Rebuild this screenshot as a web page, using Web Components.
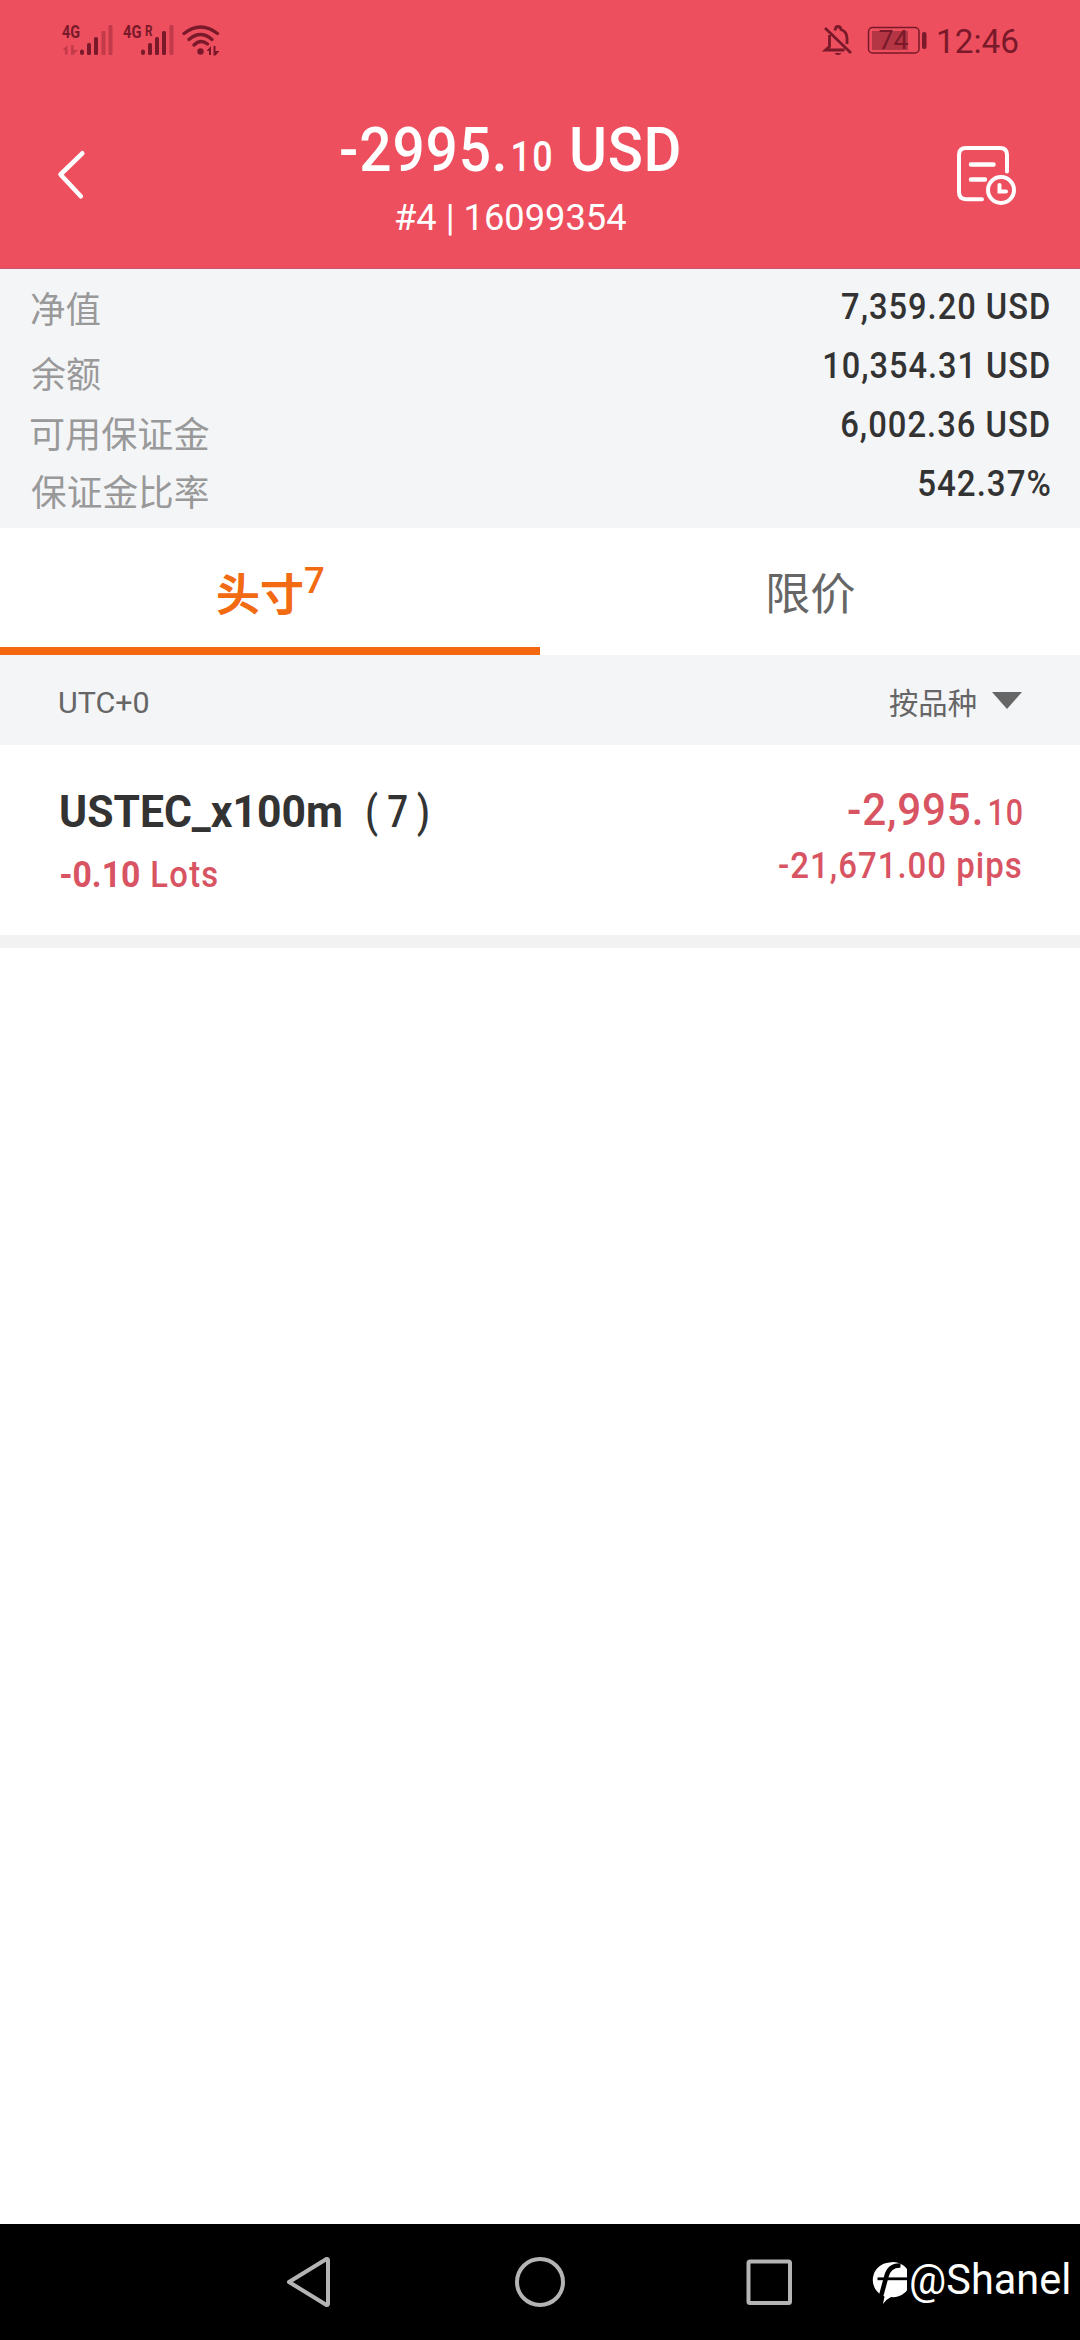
<!DOCTYPE html>
<html lang="zh-CN">
<head>
<meta charset="utf-8">
<title>Account</title>
<style>
html,body{margin:0;padding:0;background:#fff}
body{width:1080px;height:2340px;overflow:hidden}
</style>
</head>
<body>
<trade-screen></trade-screen>
<script>
const ctx = document.createElement('canvas').getContext('2d');

/* Text whose box is exactly its ink width and its cap height (or ink height for Chinese). */
class FitText extends HTMLElement {
  connectedCallback() {
    const w = +this.getAttribute('w'), h = +this.getAttribute('h');
    const cjk = this.hasAttribute('cjk');
    const size = cjk ? +this.getAttribute('cjk') : h / 0.711;
    const weight = this.getAttribute('weight') || 400;
    const ls = +(this.getAttribute('ls') || 0) * size;
    const fam = cjk ? '"Noto Sans CJK SC", sans-serif' : 'Roboto, sans-serif';
    ctx.font = `${weight} ${size}px ${fam}`;
    ctx.letterSpacing = ls + 'px';
    const m = ctx.measureText(this.textContent);
    const right = m.actualBoundingBoxRight, left = -m.actualBoundingBoxLeft;
    const sx = w / (right - left);
    const base = h / 2 + (m.fontBoundingBoxAscent - m.fontBoundingBoxDescent) / 2;
    const ty = (cjk ? m.actualBoundingBoxAscent : h) - base;
    this.attachShadow({mode: 'open'}).innerHTML = `<style>
      :host{display:block;flex:none;width:${w}px;height:${h}px}
      span{display:block;width:max-content;white-space:pre;font:${weight} ${size}px/${h}px ${fam};
        letter-spacing:${ls}px;transform-origin:0 0;transform:translate(${-left * sx}px,${ty}px) scaleX(${sx})}
    </style><span><slot></slot></span>`;
  }
}

const define = (name, html) => customElements.define(name, class extends HTMLElement {
  constructor() { super(); this.attachShadow({mode: 'open'}).innerHTML = html; }
});

define('status-bar', `<style>
  :host{display:flex;justify-content:space-between;height:80px;box-sizing:border-box;padding:20px 62px 0 60px;color:#79192a}
  .r{display:flex}
  svg{display:block}
  text{font-family:Roboto,sans-serif}
  .time{padding:9px 0 0 11px}
</style>
<svg width="165" height="40" viewBox="60 20 165 40" fill="#79192a">
  <g font-size="18.5" font-weight="700">
    <text x="62" y="38" textLength="18" lengthAdjust="spacingAndGlyphs">4G</text>
    <text x="123" y="38" textLength="18.5" lengthAdjust="spacingAndGlyphs">4G</text>
    <text x="145" y="36" font-size="15" textLength="7.5" lengthAdjust="spacingAndGlyphs">R</text>
  </g>
  <g fill="#c33b4a"><path d="M62.500 50l5-5v9.500h-2.500v-4.500zM71 45h2.500v5h4.500l-5 5h-2z"/>
    <rect x="101.500" y="31" width="4" height="24" rx="1"/><rect x="108.500" y="25" width="4" height="30" rx="1"/><rect x="169.500" y="25" width="4" height="30" rx="1"/></g>
  <rect x="80" y="49.500" width="4" height="5.500" rx="2"/><rect x="87" y="43" width="4" height="12" rx="1.500"/><rect x="94" y="37" width="4" height="18" rx="1.500"/>
  <rect x="141" y="49.500" width="4" height="5.500" rx="2"/><rect x="148" y="43" width="4" height="12" rx="1.500"/><rect x="155" y="37" width="4" height="18" rx="1.500"/><rect x="162" y="31" width="4" height="24" rx="1.500"/>
  <g fill="none" stroke="#79192a" stroke-width="3.200" stroke-linecap="round"><path d="M184 33.500Q200.500 20.500 217.500 33.500M189 39.500Q200.500 29.500 212 39.500M194 45Q200.500 38.500 207.500 44"/></g>
  <circle cx="200.500" cy="51.500" r="3.200"/><path d="M206.500 51l4.500-5v9h-2v-4zM213.500 46h2v5h4l-4 4.500h-2z"/>
</svg>
<div class="r">
<svg width="106" height="40" viewBox="820 20 106 40" fill="none" stroke="#79192a">
  <path d="M824 28L850 53M828.500 35V46.500L824.500 50H843.500M834 30.500Q834.500 26.500 837 26.500Q839.500 26.500 840 29.500Q845.500 31.500 846 37.500V44" stroke-width="2.800"/>
  <path d="M833.500 53h7q-1 2-3.500 2t-3.500-2z" fill="#79192a" stroke="none"/>
  <rect x="867.500" y="27.500" width="50.500" height="25.500" rx="4" stroke-width="1.500"/>
  <rect x="871" y="31" width="36" height="19" fill="#b43645" stroke="none"/>
  <text x="877.500" y="49" font-size="25" textLength="30" lengthAdjust="spacingAndGlyphs" fill="#79192a" stroke="none">74</text>
  <rect x="921" y="32" width="4.500" height="17" rx="2" fill="#79192a" stroke="none"/>
</svg>
<div class="time"><fit-text w="80" h="24">12:46</fit-text></div>
</div>`);

define('account-header', `<style>
  :host{display:block;height:269px;box-sizing:border-box;background:#ed4f5e;border-bottom:1px solid #c9596a;color:#fff}
  .bar{display:flex;padding:0 63px 0 57px}
  svg{display:block}
  .back{padding-top:70px}.log{padding-top:64px;margin-left:auto}
  .mid{padding-top:48px;margin-left:254px}
  .amount{display:flex;align-items:flex-end}
  .sub{padding:33px 0 0 55px}
</style>
<status-bar></status-bar>
<div class="bar">
  <div class="back"><svg width="30" height="50" viewBox="57 150 30 50" fill="none" stroke="#fff" stroke-width="4.600" stroke-linecap="round" stroke-linejoin="round"><path d="M82.300 153.300L60.500 174.500L80.800 196.200"/></svg></div>
  <div class="mid">
    <div class="amount"><fit-text w="163" h="43" weight="500" ls=".015">-2995.</fit-text><fit-text style="margin-left:9px" w="38" h="30" ls=".04" weight="500">10</fit-text><fit-text style="margin-left:21px" w="107" h="43" weight="500" ls=".01">USD</fit-text></div>
    <div class="sub"><fit-text w="230" h="26">#4 | 16099354</fit-text></div>
  </div>
  <div class="log"><svg width="62" height="62" viewBox="955 144 62 62" fill="none" stroke="#fff" stroke-width="4" stroke-linecap="round">
    <path d="M982 199.200H966Q959 199.200 959 192V155Q959 148 966 148H1000Q1007 148 1007 155V171.500"/>
    <path d="M971 164.500h22.500M971 179.500h14" stroke-width="4.500"/><circle cx="1001" cy="190" r="13"/><path d="M999.500 185v6.500h6.500" stroke-width="4" stroke-linejoin="miter"/>
  </svg></div>
</div>`);

define('account-summary', `<style>
  :host{display:flex;justify-content:space-between;height:259px;box-sizing:border-box;background:#f4f5f7;padding:0 30.500px 0 30.500px}
  .l{color:#999;padding-top:21.500px}
  .v{color:#333;padding-top:24px;display:flex;flex-direction:column;align-items:flex-end;gap:33px}
</style>
<div class="l">
  <fit-text cjk="36" w="69" h="33">净值</fit-text>
  <fit-text cjk="36" w="69" h="32" style="margin-top:32px">余额</fit-text>
  <fit-text cjk="36" w="177.500" h="32" style="margin-top:28px">可用保证金</fit-text>
  <fit-text cjk="36" w="177.500" h="33" style="margin-top:26px">保证金比率</fit-text>
</div>
<div class="v">
  <fit-text w="207.500" h="26" weight="500" ls=".03">7,359.20 USD</fit-text>
  <fit-text w="224.500" h="26" weight="500" ls=".03">10,354.31 USD</fit-text>
  <fit-text w="207.500" h="26" weight="500" ls=".03">6,002.36 USD</fit-text>
  <fit-text w="131" h="26" weight="500" ls=".03">542.37%</fit-text>
</div>`);

define('order-tabs', `<style>
  :host{display:flex;height:127px;background:#fff}
  div{width:540px;box-sizing:border-box;display:flex;align-items:flex-start}
  .on{color:#f26a12;border-bottom:8px solid #f5670f;padding:39px 0 0 217px}
  .off{color:#666;padding:44.500px 0 0 228.500px}
</style>
<div class="on"><fit-text cjk="44" w="86" h="41" weight="700" style="margin-top:4.500px">头寸</fit-text><fit-text w="19" h="26" weight="500" style="margin-left:2px">7</fit-text></div>
<div class="off"><fit-text cjk="44" w="85.500" h="41">限价</fit-text></div>`);

define('sort-bar', `<style>
  :host{display:flex;justify-content:space-between;height:90px;box-sizing:border-box;background:#f4f5f7;padding:0 58px 0 60px;color:#666}
  .s{display:flex;padding-top:33px;gap:16px}
  svg{display:block;margin-top:4px}
</style>
<fit-text w="88" h="21" style="margin-top:37px">UTC+0</fit-text>
<div class="s"><fit-text cjk="30" w="87" h="27">按品种</fit-text>
<svg width="30" height="17"><path d="M0 0H30L15 17z" fill="#666"/></svg></div>`);

define('position-row', `<style>
  :host{display:flex;justify-content:space-between;height:203px;box-sizing:border-box;padding:0 59px 0 60.500px;background:#fff;color:#d85462;border-bottom:13px solid #f2f2f3}
  .n,.q,.p{display:flex;align-items:flex-end}
  .n{color:#333;padding-top:50px}.q{padding-top:34px}
  .r{display:flex;flex-direction:column;align-items:flex-end;gap:27px;padding-top:48px}
</style>
<div>
  <div class="n"><fit-text w="280" h="32" weight="700">USTEC_x100m</fit-text><fit-text w="61" h="31" weight="500" ls=".25" style="margin-left:26px">(7)</fit-text></div>
  <div class="q"><fit-text w="78.500" h="26" weight="700">-0.10</fit-text><fit-text w="65.500" h="26" weight="500" ls=".04" style="margin-left:13px">Lots</fit-text></div>
</div>
<div class="r">
  <div class="p"><fit-text w="133" h="32" weight="500" ls=".02">-2,995.</fit-text><fit-text w="31.500" h="26" weight="500" ls=".03" style="margin-left:9px">10</fit-text></div>
  <fit-text w="242" h="26" weight="500" ls=".03">-21,671.00 pips</fit-text>
</div>`);

define('nav-bar', `<style>
  :host{display:flex;height:116px;background:#000;color:#fff}
  svg{display:block}
  .mark{display:flex;padding-top:38px;gap:4px}
  .mark fit-text{margin-top:2px}
</style>
<svg width="872" height="116" viewBox="0 2224 872 116" fill="none" stroke="#b4b4b4" stroke-width="4" stroke-linejoin="round">
  <path d="M289 2282L326.500 2259Q328 2258.500 328 2260.500V2303.500Q328 2305.500 326.500 2305z"/><circle cx="540" cy="2282" r="23"/><rect x="748.500" y="2261.500" width="41.500" height="41.500" rx="1.500"/>
</svg>
<div class="mark"><svg width="35" height="42" viewBox="0 0 35 42">
  <path d="M17.500 0.500A17.500 17.500 0 1 1 19 35Q14.500 37 11 42L12.500 34.500A17.500 17.500 0 0 1 17.500 .5z" fill="#fff"/>
  <path d="M28.500 3.500Q17.500 3 14.500 14L8.500 36" stroke="#000" stroke-width="4.600" fill="none"/>
  <path d="M5.500 16.800H35" stroke="#000" stroke-width="2.800"/>
</svg><fit-text w="158" h="30">@Shanel</fit-text></div>`);

define('trade-screen', `<style>
  :host{display:flex;flex-direction:column;width:1080px;height:2340px;background:#fff}
  :host > *{flex:none}
  .space{flex:1}
</style>
<account-header></account-header>
<account-summary></account-summary>
<order-tabs></order-tabs>
<sort-bar></sort-bar>
<position-row></position-row>
<div class="space"></div>
<nav-bar></nav-bar>`);
customElements.define('fit-text', FitText);
</script>
</body>
</html>
